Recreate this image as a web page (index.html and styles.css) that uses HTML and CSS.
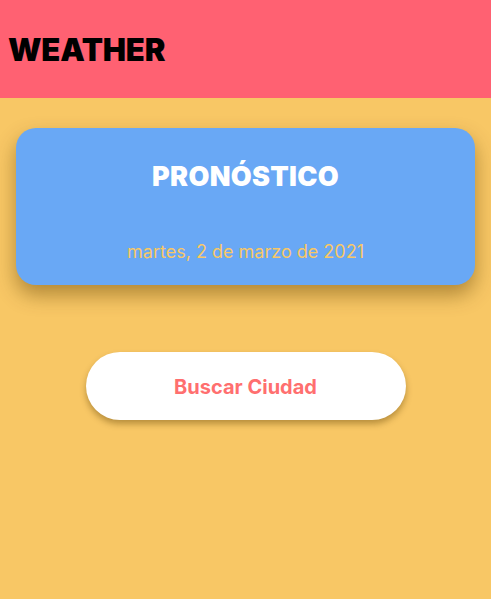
FILE: index.html
```html
<!DOCTYPE html>
<html lang="es">
<head>
<meta charset="utf-8">
<title>Weather</title>
<link rel="stylesheet" href="styles.css">
</head>
<body>
<header class="header">
  <h1 class="brand">WEATHER</h1>
</header>
<main class="content">
  <section class="card">
    <h2 class="card-title">PRONÓSTICO</h2>
    <p class="card-date">martes, 2 de marzo de 2021</p>
  </section>
  <button class="search-btn">Buscar Ciudad</button>
</main>
</body>
</html>
```
FILE: styles.css
```css
html, body {
  margin: 0;
  padding: 0;
}
body {
  background: #f8c765;
  font-family: Inter, "Noto Sans", sans-serif;
  min-height: 599px;
}
.header {
  background: #ff6172;
  height: 98px;
  display: flex;
  align-items: center;
  padding: 0 8px;
  box-sizing: border-box;
}
.brand {
  margin: 0;
  font-size: 31px;
  font-weight: 900;
  color: #000;
  letter-spacing: -0.2px;
}
.content {
  padding: 30px 16px 0;
  display: flex;
  flex-direction: column;
  align-items: center;
}
.card {
  align-self: stretch;
  height: 157px;
  background: #69a8f5;
  border-radius: 20px;
  box-shadow: 0 10px 20px rgba(90, 60, 0, 0.45);
  display: flex;
  flex-direction: column;
  align-items: center;
  box-sizing: border-box;
  padding-top: 31px;
}
.card-title {
  margin: 0;
  font-size: 27px;
  font-weight: 900;
  color: #fff;
  line-height: 36px;
  letter-spacing: 0.3px;
}
.card-date {
  margin: 45px 0 0;
  font-size: 18px;
  color: #f8c765;
  line-height: 24px;
}
.search-btn {
  margin-top: 67px;
  width: 320px;
  height: 68px;
  border: none;
  border-radius: 34px;
  background: #fff;
  color: #ff6f6f;
  font-family: Inter, "Noto Sans", sans-serif;
  font-size: 20px;
  font-weight: 700;
  padding-top: 3px;
  box-shadow: 0 4px 6px rgba(90, 60, 0, 0.4);
}
```
